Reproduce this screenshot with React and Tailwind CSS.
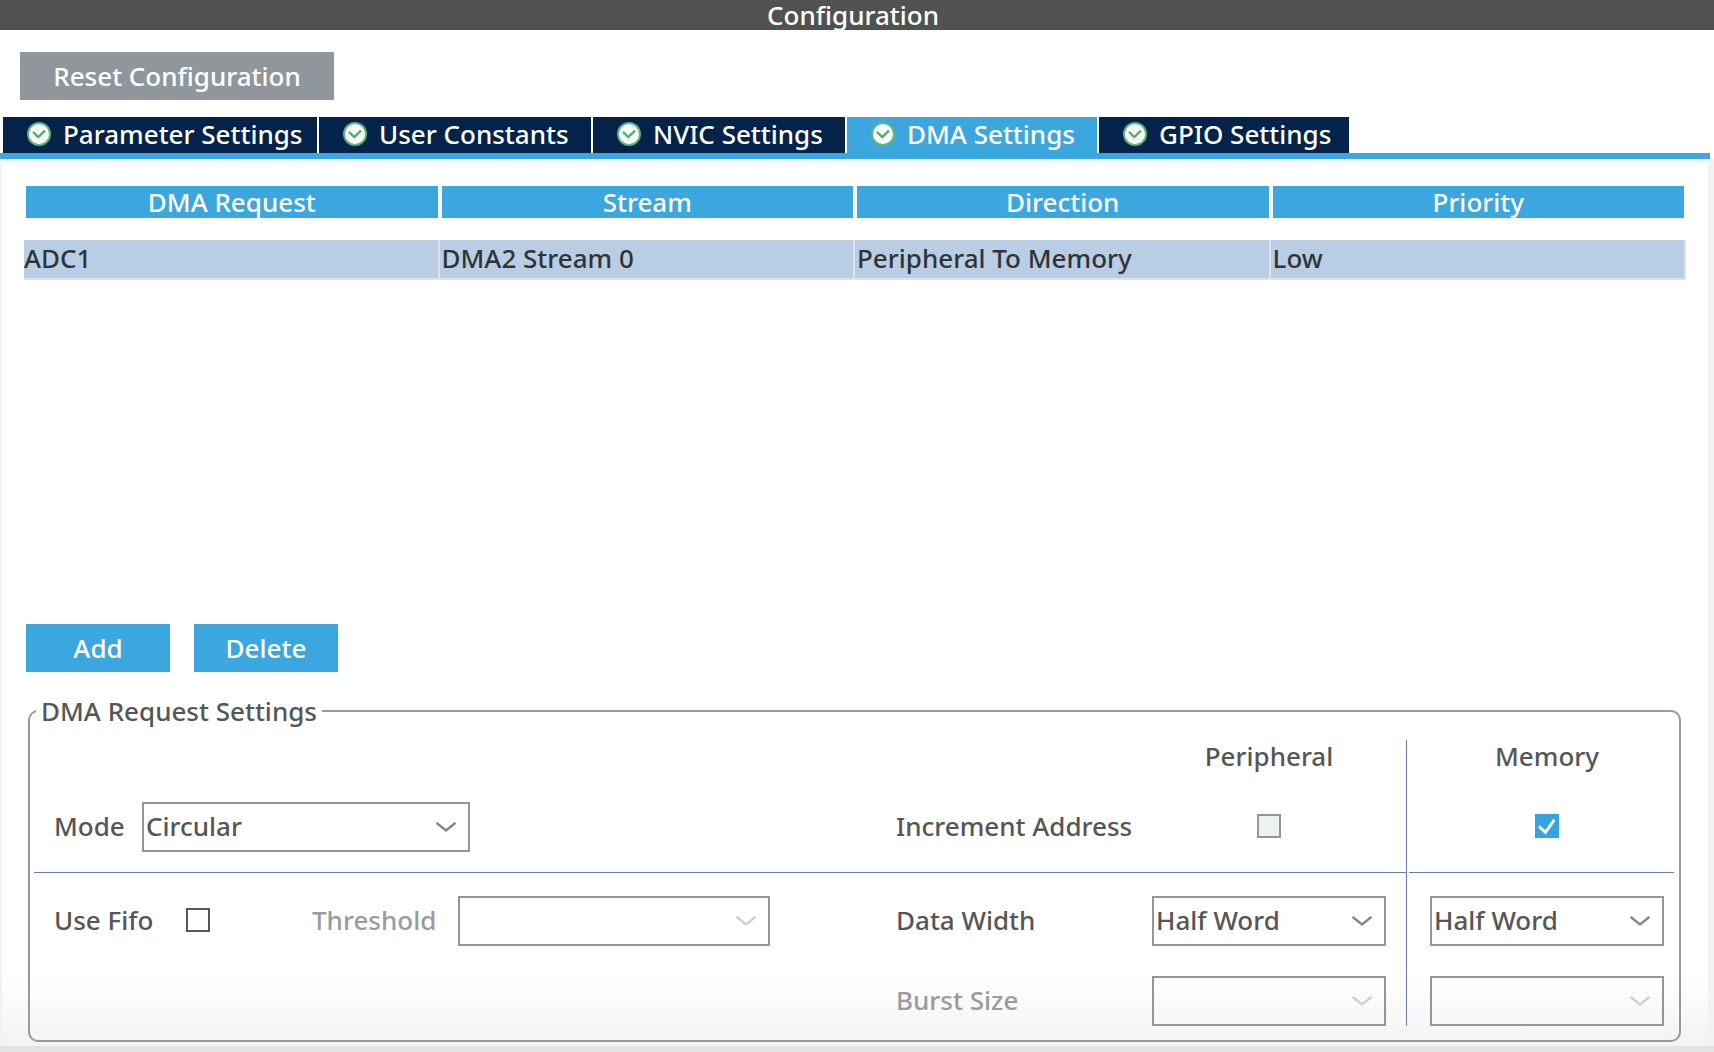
import { useState } from "react";
import clsx from "clsx";

const tabs = [
  { name: "Parameter Settings", width: "w-[314px]" },
  { name: "User Constants", width: "w-[272px]" },
  { name: "NVIC Settings", width: "w-[252px]" },
  { name: "DMA Settings", width: "w-[250px]" },
  { name: "GPIO Settings", width: "w-[250px]" },
];

const columns = ["DMA Request", "Stream", "Direction", "Priority"];
const requests = [["ADC1", "DMA2 Stream 0", "Peripheral To Memory", "Low"]];

const actionButton = "h-12 w-36 bg-[#3ba7de] text-white";

function StatusIcon() {
  return (
    <svg viewBox="0 0 24 24" className="h-6 w-6 shrink-0" aria-hidden="true">
      <circle cx="12" cy="12" r="11" fill="#fff" stroke="#5cb878" strokeWidth="2" />
      <path d="M6 9.8l5.2 5.2L18 8.6" fill="none" stroke="#4fb06d" strokeWidth="2.4" />
    </svg>
  );
}

function Select({ id, label, options = [], width, disabled }) {
  return (
    <div className={clsx("relative", width)}>
      <select
        id={id}
        aria-label={label}
        disabled={disabled}
        className="block h-[50px] w-full appearance-none border-2 border-[#939695] bg-transparent pb-[2px] pl-[2px] text-[#555655] opacity-100"
      >
        {options.map((option) => (
          <option key={option}>{option}</option>
        ))}
      </select>
      <svg
        viewBox="0 0 20 10"
        className={clsx(
          "pointer-events-none absolute right-[14px] top-5 h-[10px] w-5",
          disabled ? "text-[#cfcfcf]" : "text-[#858786]"
        )}
        aria-hidden="true"
      >
        <path d="M0.5 0.8L10 8.4 19.5 0.8" fill="none" stroke="currentColor" strokeWidth="2.4" />
      </svg>
    </div>
  );
}

function Checkbox({ id, label, defaultChecked, disabled }) {
  return (
    <span className="relative block h-6 w-6">
      <input
        id={id}
        type="checkbox"
        aria-label={label}
        defaultChecked={defaultChecked}
        disabled={disabled}
        className="peer block h-6 w-6 appearance-none border-2 border-[#555655] checked:border-[#35a4de] checked:bg-[#35a4de] disabled:border-[#939695] disabled:bg-[#edf1f2]"
      />
      <svg
        viewBox="0 0 24 24"
        className="pointer-events-none absolute inset-0 hidden h-6 w-6 peer-checked:block"
        aria-hidden="true"
      >
        <path d="M4 12.4l6.4 6L19.4 5.8" fill="none" stroke="#fff" strokeWidth="2.9" />
      </svg>
    </span>
  );
}

function RequestTable() {
  return (
    <table className="w-full table-fixed border-separate border-spacing-0">
      <thead>
        <tr>
          {columns.map((column) => (
            <th key={column} className="px-[2px] pb-[22px] font-medium">
              <span className="block h-8 bg-[#3ba7de] leading-8 text-white">{column}</span>
            </th>
          ))}
        </tr>
      </thead>
      <tbody>
        {requests.map((row) => (
          <tr key={row[0]} className="bg-[#b9cee5] text-[#303436]">
            {row.map((cell) => (
              <td
                key={cell}
                className="h-10 border-b-2 border-r-2 border-[#dfe3e8] p-0 pb-[2px] pl-[2px] leading-9 first:pl-0"
              >
                {cell}
              </td>
            ))}
          </tr>
        ))}
      </tbody>
    </table>
  );
}

function RequestSettings() {
  return (
    <fieldset className="ml-1 mr-[5px] rounded-[10px] border-2 border-[#979a99] pb-[14px] text-[#555655]">
      <legend className="ml-[6px] px-[5px] leading-[34px]">DMA Request Settings</legend>

      <div className="flex pl-1 pr-[5px] pt-3">
        <div className="flex-1 border-r border-[#6480a8]">
          <div className="grid grid-cols-[1fr_256px_234px] items-center border-b border-[#6480a8] px-5 pb-5">
            <span className="col-start-3 mb-[30px] text-center leading-8">Peripheral</span>
            <div className="col-start-1 flex items-center">
              <label htmlFor="mode" className="w-[88px] pb-[2px]">Mode</label>
              <Select id="mode" options={["Circular", "Normal"]} width="w-[328px]" />
            </div>
            <span className="pb-[2px]">Increment Address</span>
            <div className="flex justify-center pb-[2px]">
              <Checkbox label="Increment peripheral address" disabled />
            </div>
          </div>

          <div className="grid grid-cols-[1fr_256px_234px] items-center gap-y-[30px] px-5 pt-[23px]">
            <div className="flex items-center">
              <div className="flex items-center pb-[2px]">
                <label htmlFor="fifo" className="w-[132px]">Use Fifo</label>
                <Checkbox id="fifo" />
                <label htmlFor="threshold" className="ml-[102px] w-[146px] text-[#9a9b9a]">Threshold</label>
              </div>
              <Select id="threshold" width="w-[312px]" disabled />
            </div>
            <span className="pb-[2px]">Data Width</span>
            <Select label="Peripheral data width" options={["Half Word", "Byte", "Word"]} width="w-full" />
            <span className="col-start-2 pb-[2px] text-[#9a9b9a]">Burst Size</span>
            <Select label="Peripheral burst size" width="w-full" disabled />
          </div>
        </div>

        <div className="w-[267px] pl-[2px]">
          <div className="flex flex-col items-center border-b border-[#6480a8] pb-5 pl-[21px] pr-[10px]">
            <span className="mb-[30px] leading-8">Memory</span>
            <div className="flex h-[50px] items-center pb-[2px]">
              <Checkbox label="Increment memory address" defaultChecked />
            </div>
          </div>
          <div className="grid gap-y-[30px] pl-[21px] pr-[10px] pt-[23px]">
            <Select label="Memory data width" options={["Half Word", "Byte", "Word"]} width="w-full" />
            <Select label="Memory burst size" width="w-full" disabled />
          </div>
        </div>
      </div>
    </fieldset>
  );
}

export default function App() {
  const [active, setActive] = useState("DMA Settings");

  return (
    <div className="flex min-h-screen flex-col bg-white font-['Noto_Sans',sans-serif] text-[26px] font-medium leading-9">
      <header className="h-[30px] bg-[#505251] pr-2 text-center text-white">
        <h1 className="font-medium leading-[30px]">Configuration</h1>
      </header>

      <div className="px-5 pb-[17px] pt-[22px]">
        <button type="button" className="block h-12 w-[314px] bg-[#8f979d] text-white">
          Reset Configuration
        </button>
      </div>

      <div role="tablist" className="mr-1 flex gap-[2px] border-b-[6px] border-[#3ba7de] pl-[3px]">
        {tabs.map(({ name, width }) => (
          <button
            key={name}
            type="button"
            role="tab"
            aria-selected={active === name}
            onClick={() => setActive(name)}
            className={clsx(
              "flex h-9 items-center gap-3 whitespace-nowrap pb-[2px] pl-6 text-white",
              width,
              active === name ? "bg-[#3ba7de]" : "bg-[#03234b]"
            )}
          >
            <StatusIcon />
            {name}
          </button>
        ))}
      </div>

      <main className="flex flex-1 flex-col border-l-2 border-r-[6px] border-t-[3px] border-[#f0f2f4] bg-linear-to-t from-[#f3f3f3] to-white to-[72px] px-[22px] pb-1 pt-6">
        <div className="min-h-[200px] flex-1">
          <RequestTable />
        </div>
        <div className="mb-[22px] ml-[2px] flex gap-6">
          <button type="button" className={actionButton}>Add</button>
          <button type="button" className={actionButton}>Delete</button>
        </div>
        <RequestSettings />
      </main>

      <footer className="h-[6px] bg-[#e2e3e5]" />
    </div>
  );
}
